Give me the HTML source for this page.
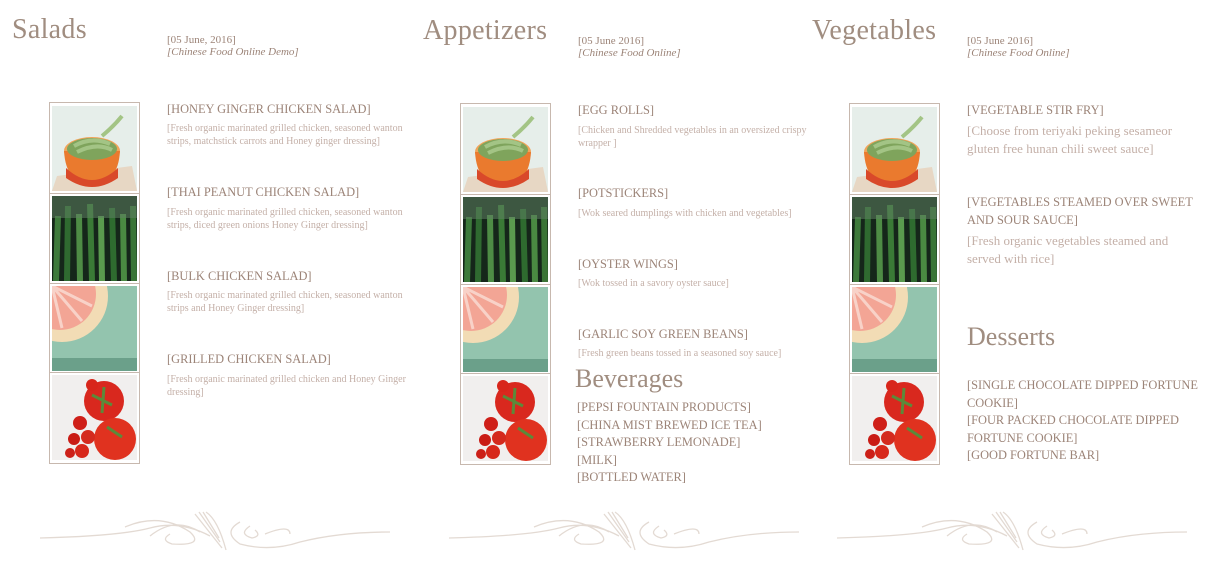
<!DOCTYPE html>
<html><head><meta charset="utf-8"><style>
*{margin:0;padding:0;box-sizing:border-box}
body{width:1211px;height:572px;background:#fff;position:relative;overflow:hidden;font-family:"Liberation Serif",serif;color:#9c8478}
.a{position:absolute;white-space:nowrap}
h1{position:absolute;font-weight:normal;font-size:28px;color:#a08d80;letter-spacing:0.3px}
h2{position:absolute;font-weight:normal;font-size:26px;color:#a08d80}
.d{font-size:11px;line-height:12px;color:#9c8478}
.d i{display:block}
.t{font-size:12.4px;color:#9c8478}
.s{font-size:10px;line-height:13px;color:#c4b0a8}
.s2{font-size:13px;line-height:18px;color:#c4b0a8}
.l{font-size:12.4px;line-height:17.6px;color:#9c8478}
.strip{position:absolute;width:91px;height:362px;border:1px solid #c7b8ae;background:#fff}
.ph{position:absolute;left:2px;width:85px;height:85px;overflow:hidden}
.sep{position:absolute;left:0;width:89px;height:1px;background:#c7b8ae}
</style></head><body>

<!-- column 1 -->
<h1 style="left:12px;top:14px">Salads</h1>
<div class="a d" style="left:167px;top:34px">[05 June, 2016]<i>[Chinese Food Online Demo]</i></div>
<div class="a t" style="left:167px;top:102px">[HONEY GINGER CHICKEN SALAD]</div>
<div class="a s" style="left:167px;top:122px">[Fresh organic marinated grilled chicken, seasoned wanton<br>strips, matchstick carrots and Honey ginger dressing]</div>
<div class="a t" style="left:167px;top:185px">[THAI PEANUT CHICKEN SALAD]</div>
<div class="a s" style="left:167px;top:206px">[Fresh organic marinated grilled chicken, seasoned wanton<br>strips, diced green onions Honey Ginger dressing]</div>
<div class="a t" style="left:167px;top:269px">[BULK CHICKEN SALAD]</div>
<div class="a s" style="left:167px;top:289px">[Fresh organic marinated grilled chicken, seasoned wanton<br>strips and Honey Ginger dressing]</div>
<div class="a t" style="left:167px;top:352px">[GRILLED CHICKEN SALAD]</div>
<div class="a s" style="left:167px;top:373px">[Fresh organic marinated grilled chicken and Honey Ginger<br>dressing]</div>

<!-- column 2 -->
<h1 style="left:423px;top:15px">Appetizers</h1>
<div class="a d" style="left:578px;top:35px">[05 June 2016]<i>[Chinese Food Online]</i></div>
<div class="a t" style="left:578px;top:103px">[EGG ROLLS]</div>
<div class="a s" style="left:578px;top:124px">[Chicken and Shredded vegetables in an oversized crispy<br>wrapper ]</div>
<div class="a t" style="left:578px;top:186px">[POTSTICKERS]</div>
<div class="a s" style="left:578px;top:207px">[Wok seared dumplings with chicken and vegetables]</div>
<div class="a t" style="left:578px;top:257px">[OYSTER WINGS]</div>
<div class="a s" style="left:578px;top:277px">[Wok tossed in a savory oyster sauce]</div>
<div class="a t" style="left:578px;top:327px">[GARLIC SOY GREEN BEANS]</div>
<div class="a s" style="left:578px;top:347px">[Fresh green beans tossed in a seasoned soy sauce]</div>
<h2 style="left:575px;top:364px">Beverages</h2>
<div class="a l" style="left:577px;top:399px">[PEPSI FOUNTAIN PRODUCTS]<br>[CHINA MIST BREWED ICE TEA]<br>[STRAWBERRY LEMONADE]<br>[MILK]<br>[BOTTLED WATER]</div>

<!-- column 3 -->
<h1 style="left:812px;top:15px">Vegetables</h1>
<div class="a d" style="left:967px;top:35px">[05 June 2016]<i>[Chinese Food Online]</i></div>
<div class="a t" style="left:967px;top:103px">[VEGETABLE STIR FRY]</div>
<div class="a s2" style="left:967px;top:122px">[Choose from teriyaki peking sesameor<br>gluten free hunan chili sweet sauce]</div>
<div class="a t" style="left:967px;top:193px;line-height:18px">[VEGETABLES STEAMED OVER SWEET<br>AND SOUR SAUCE]</div>
<div class="a s2" style="left:967px;top:232px">[Fresh organic vegetables steamed and<br>served with rice]</div>
<h2 style="left:967px;top:322px">Desserts</h2>
<div class="a l" style="left:967px;top:377px">[SINGLE CHOCOLATE DIPPED FORTUNE<br>COOKIE]<br>[FOUR PACKED CHOCOLATE DIPPED<br>FORTUNE COOKIE]<br>[GOOD FORTUNE BAR]</div>

<!-- strips -->
<svg width="0" height="0" style="position:absolute">
<defs>
<g id="p1"><rect width="85" height="85" fill="#e6eeea"/><path d="M5 70 L80 60 L85 85 L0 85Z" fill="#e7d7c4"/><ellipse cx="40" cy="45" rx="28" ry="14" fill="#f0a45a"/><path d="M12 45 Q14 78 40 80 Q66 78 68 45Z" fill="#ea7a2e"/><path d="M14 62 Q40 86 66 62 L66 72 Q40 90 14 72Z" fill="#d9492a"/><ellipse cx="40" cy="43" rx="25" ry="11" fill="#7fa45c"/><path d="M22 40 Q40 30 58 38 M25 46 Q45 36 60 44 M50 30 Q62 20 70 10" stroke="#a3c485" stroke-width="4" fill="none"/></g>
<g id="p2"><rect width="85" height="85" fill="#15261a"/><g stroke-width="6" fill="none"><path d="M6 20 L4 85" stroke="#3d7a3b"/><path d="M16 10 L15 85" stroke="#2f6a30"/><path d="M27 18 L28 85" stroke="#4e8c45"/><path d="M38 8 L40 85" stroke="#3a7a36"/><path d="M49 20 L50 85" stroke="#5a9a4e"/><path d="M60 12 L62 85" stroke="#2e6b2f"/><path d="M71 18 L72 85" stroke="#4a8a42"/><path d="M81 10 L82 85" stroke="#3a7436"/></g><rect width="85" height="22" fill="#5f7f62" opacity=".55"/></g>
<g id="p3"><rect width="85" height="85" fill="#93c4ae"/><rect y="72" width="85" height="13" fill="#6ba08a"/><circle cx="10" cy="10" r="46" fill="#f2dcb5"/><circle cx="8" cy="8" r="36" fill="#f3a595"/><path d="M0 0 L40 20 M0 0 L30 35 M0 0 L10 42" stroke="#f8d2c8" stroke-width="3"/></g>
<g id="p4"><rect width="85" height="85" fill="#f1efee"/><circle cx="52" cy="26" r="20" fill="#d9281e"/><circle cx="63" cy="64" r="21" fill="#e0321f"/><circle cx="28" cy="48" r="7" fill="#cf1f18"/><circle cx="36" cy="62" r="7" fill="#d42a1e"/><circle cx="22" cy="64" r="6" fill="#c91c15"/><circle cx="30" cy="76" r="7" fill="#d7281b"/><circle cx="40" cy="10" r="6" fill="#d8261b"/><circle cx="18" cy="78" r="5" fill="#cc2018"/><path d="M40 20 L60 30 M52 12 L50 38 M55 52 L70 62" stroke="#5b8a3a" stroke-width="3"/></g>
</defs></svg>

<div class="strip" style="left:49px;top:102px">
<svg class="ph" style="top:3px" viewBox="0 0 85 85"><use href="#p1"/></svg>
<div class="sep" style="top:90px"></div>
<svg class="ph" style="top:93px" viewBox="0 0 85 85"><use href="#p2"/></svg>
<div class="sep" style="top:180px"></div>
<svg class="ph" style="top:183px" viewBox="0 0 85 85"><use href="#p3"/></svg>
<div class="sep" style="top:269px"></div>
<svg class="ph" style="top:272px" viewBox="0 0 85 85"><use href="#p4"/></svg>
</div>
<div class="strip" style="left:460px;top:103px">
<svg class="ph" style="top:3px" viewBox="0 0 85 85"><use href="#p1"/></svg>
<div class="sep" style="top:90px"></div>
<svg class="ph" style="top:93px" viewBox="0 0 85 85"><use href="#p2"/></svg>
<div class="sep" style="top:180px"></div>
<svg class="ph" style="top:183px" viewBox="0 0 85 85"><use href="#p3"/></svg>
<div class="sep" style="top:269px"></div>
<svg class="ph" style="top:272px" viewBox="0 0 85 85"><use href="#p4"/></svg>
</div>
<div class="strip" style="left:849px;top:103px">
<svg class="ph" style="top:3px" viewBox="0 0 85 85"><use href="#p1"/></svg>
<div class="sep" style="top:90px"></div>
<svg class="ph" style="top:93px" viewBox="0 0 85 85"><use href="#p2"/></svg>
<div class="sep" style="top:180px"></div>
<svg class="ph" style="top:183px" viewBox="0 0 85 85"><use href="#p3"/></svg>
<div class="sep" style="top:269px"></div>
<svg class="ph" style="top:272px" viewBox="0 0 85 85"><use href="#p4"/></svg>
</div>

<!-- ornaments -->
<svg class="a" style="left:0;top:502px" width="1211" height="60">
<defs><g id="orn" fill="none" stroke="#e3dad3" stroke-width="1.3">
<path d="M40 36 Q120 34 150 26 Q180 18 210 34"/>
<path d="M125 25 Q160 10 190 30 Q205 44 172 42 Q160 38 170 32"/>
<path d="M150 34 Q175 14 200 30"/>
<path d="M195 12 L222 46 M199 10 L220 40 M203 10 L219 36"/>
<path d="M206 10 Q218 18 226 48"/>
<path d="M240 20 Q222 30 240 42 Q270 50 300 40 Q340 30 390 30"/>
<path d="M250 24 Q238 32 252 36 Q262 34 255 28"/>
<path d="M265 32 Q290 22 290 32"/>
</g></defs>
<use href="#orn"/><use href="#orn" x="409"/><use href="#orn" x="797"/>
</svg>
</body></html>
